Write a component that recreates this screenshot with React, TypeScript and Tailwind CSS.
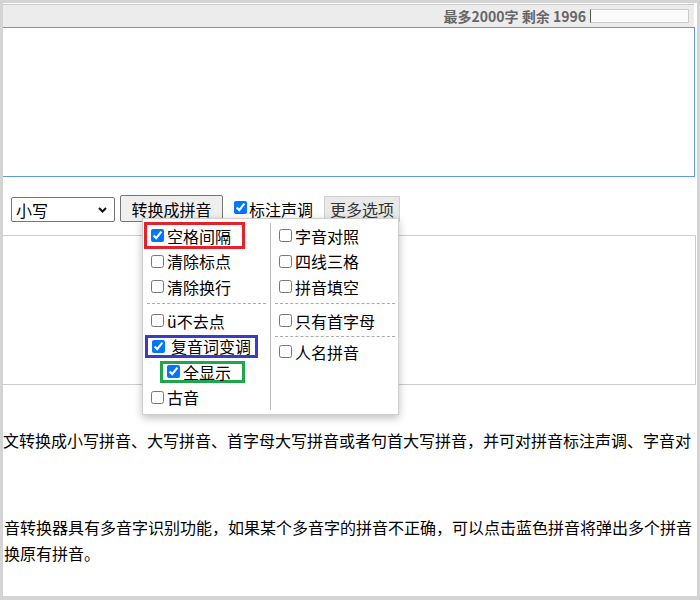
import React from "react";

function Box({ checked = false }: { checked?: boolean }) {
  return (
    <input
      type="checkbox"
      defaultChecked={checked}
      className="ml-[4px] mr-[3px] w-[13px] h-[13px] shrink-0"
    />
  );
}

function Row({ children }: { children: React.ReactNode }) {
  return <div className="h-[25.5px] flex items-center whitespace-nowrap">{children}</div>;
}

function Item({ label, checked = false }: { label: string; checked?: boolean }) {
  return (
    <Row>
      <label className="flex items-center">
        <Box checked={checked} />
        <span className="leading-none">{label}</span>
      </label>
    </Row>
  );
}

export default function App() {
  return (
    <div className="w-[700px] h-[600px] bg-[#d4d4d4] pt-[3px] pl-[3px] font-['Noto_Sans_CJK_SC',sans-serif] text-black">
      <div className="relative w-[694px] h-[593px] bg-white overflow-hidden">
        {/* header */}
        <div className="mt-[1px] mr-[3px] h-[23px] border-t border-[#c8c8c8] bg-[#ececec] flex items-center justify-end pr-[5px] gap-[4px]">
          <span className="text-[14px] font-bold text-[#666] leading-none">最多2000字 剩余 1996</span>
          <div className="w-[99px] h-[14px] border border-[#cccccc] border-l-[#4a5a3a] bg-[#fafafa]" />
        </div>

        {/* textarea */}
        <div className="-ml-[10px] mr-[2px] h-[150px] border border-[#5b9be8] bg-white" />

        {/* controls */}
        <div className="mt-[18px] h-[27px] flex items-end pl-[8px] text-[16px]">
          <div className="w-[104px] h-[25px] border border-[#767676] rounded-[2px] flex items-center justify-between pl-[4px] pr-[7px]">
            <span className="leading-none">小写</span>
            <svg width="9" height="6" viewBox="0 0 9 6" fill="none">
              <path d="M1 1 L4.5 4.5 L8 1" stroke="#111" strokeWidth="2" />
            </svg>
          </div>
          <div className="ml-[5px] w-[103px] h-[27px] border border-[#767676] rounded-[2px] bg-[#efefef] flex items-center justify-center leading-none">
            转换成拼音
          </div>
          <label className="ml-[7px] self-center flex items-center">
            <input type="checkbox" defaultChecked className="ml-[4px] mr-[2px] w-[13px] h-[13px] -mt-[3px]" />
            <span className="leading-none">标注声调</span>
          </label>
          <div className="ml-[11px] w-[76px] h-[26px] bg-[#e9e9e9] border border-[#cfcfcf] flex items-center justify-center text-[#333] leading-none">
            更多选项
          </div>
        </div>

        {/* result box */}
        <div className="mt-[13px] -ml-[10px] mr-[1px] h-[150px] border border-[#cccccc]" />

        {/* paragraphs */}
        <p className="mt-[42px] text-[16px] leading-[26px] whitespace-nowrap">
          文转换成小写拼音、大写拼音、首字母大写拼音或者句首大写拼音，并可对拼音标注声调、字音对
        </p>
        <p className="mt-[61px] ml-[1px] text-[16px] leading-[26px] whitespace-nowrap">
          <span className="block">音转换器具有多音字识别功能，如果某个多音字的拼音不正确，可以点击蓝色拼音将弹出多个拼音</span>
          <span className="block">换原有拼音。</span>
        </p>

        {/* dropdown */}
        <div className="absolute left-[139px] top-[215px] w-[257px] h-[197px] bg-white border border-[#d0d0d0] shadow-[0_3px_8px_rgba(0,0,0,0.25)] flex pl-[4px] pr-[3px] py-[4px] text-[16px]">
          <div className="w-[119px] flex flex-col">
            <Row>
              <label className="-ml-[3px] h-[27px] border-[3px] border-[#e3222b] flex items-center pr-[11px]">
                <Box checked />
                <span className="leading-none">空格间隔</span>
              </label>
            </Row>
            <Item label="清除标点" />
            <Item label="清除换行" />
            <div className="mt-[3.5px] mb-[4px] border-t border-dashed border-[#aaaaaa]" />
            <Item label="ü不去点" />
            <Row>
              <label className="-ml-[2px] h-[23px] border-[3px] border-[#3b3bc4] flex items-center pr-[4px]">
                <Box checked />
                <span className="leading-none ml-[3px]">复音词变调</span>
              </label>
            </Row>
            <Row>
              <label className="ml-[13px] h-[22px] border-[3px] border-[#1fa64a] flex items-center pr-[11px]">
                <Box checked />
                <span className="leading-none">全显示</span>
              </label>
            </Row>
            <Item label="古音" />
          </div>
          <div className="mx-[4px] w-px bg-[#bbbbbb]" />
          <div className="w-[120px] flex flex-col">
            <Item label="字音对照" />
            <Item label="四线三格" />
            <Item label="拼音填空" />
            <div className="mt-[3.5px] mb-[4px] border-t border-dashed border-[#aaaaaa]" />
            <Item label="只有首字母" />
            <div className="mt-[2.5px] mb-[2px] border-t border-dashed border-[#aaaaaa]" />
            <Item label="人名拼音" />
          </div>
        </div>
      </div>
    </div>
  );
}
